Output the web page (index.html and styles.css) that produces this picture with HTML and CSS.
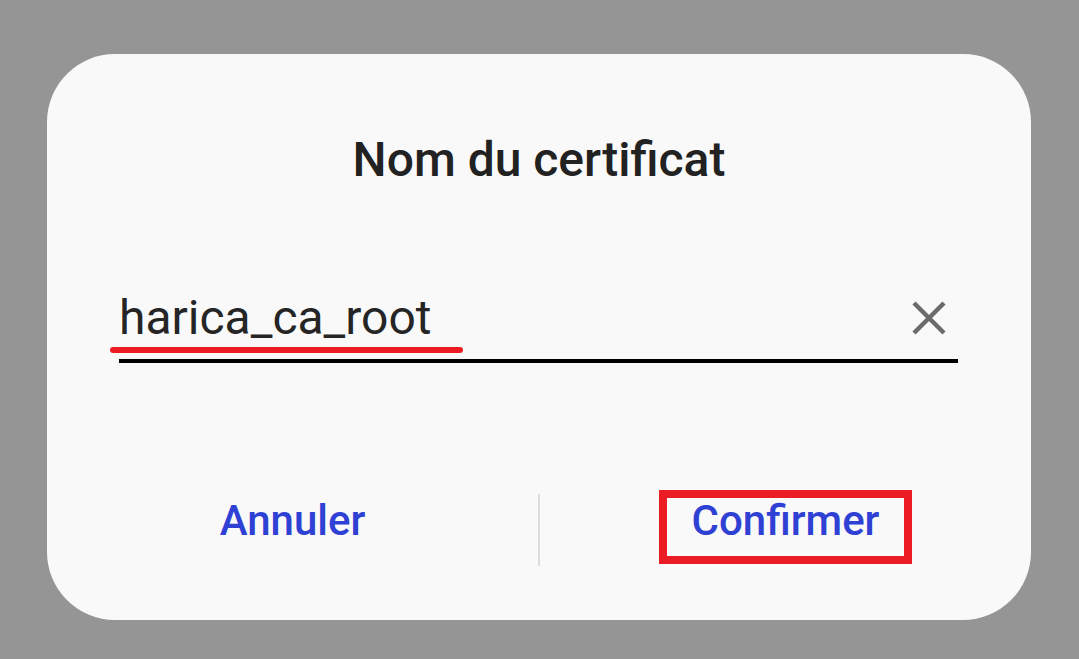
FILE: index.html
```html
<!DOCTYPE html>
<html lang="fr">
<head>
    <meta charset="UTF-8">
    <meta name="viewport" content="width=device-width, initial-scale=1.0">
    <title>Nom du certificat</title>
    <link rel="stylesheet" href="styles.css">
</head>
<body>

    <div class="dialog">
        <h1 class="title">Nom du certificat</h1>

        <div class="field">
            <span class="value">harica_ca_root<span class="mark"></span></span>
            <button class="clear" aria-label="Effacer">
                <svg width="34" height="34" viewBox="0 0 34 34">
                    <path d="M2 2 L32 32 M32 2 L2 32" stroke="#6b6b6b" stroke-width="4.5" fill="none"/>
                </svg>
            </button>
        </div>

        <div class="actions">
            <div class="action">
                <span class="label">Annuler</span>
            </div>
            <div class="divider"></div>
            <div class="action">
                <span class="label boxed">Confirmer</span>
            </div>
        </div>
    </div>

</body>
</html>
```

FILE: styles.css
```css
body {
    margin: 0;
    padding: 54px 48px 0 47px;
    background-color: #959595;
    font-family: Roboto, "Liberation Sans", sans-serif;
    height: 659px;
    box-sizing: border-box;
    overflow: hidden;
}

.dialog {
    background-color: #f9f9f9;
    border-radius: 68px;
    height: 566px;
    display: flex;
    flex-direction: column;
}

.title {
    margin: 78px 0 0 0;
    font-size: 48px;
    line-height: 56px;
    font-weight: 500;
    color: #222222;
    text-align: center;
}

.field {
    margin: 102px 73px 0 72px;
    padding: 0 12px 13px 0;
    border-bottom: 4px solid #000000;
    display: flex;
    align-items: center;
    justify-content: space-between;
}

.value {
    position: relative;
    font-size: 48px;
    line-height: 56px;
    color: #252525;
}

/* red hand-drawn underline on top of the field */
.mark {
    position: absolute;
    left: -9px;
    top: 57px;
    width: 353px;
    height: 6px;
    border-radius: 3px;
    background-color: #ec1c24;
}

.clear {
    background: none;
    border: none;
    padding: 0;
    width: 34px;
    height: 34px;
    display: flex;
}

.actions {
    margin-top: 127px;
    display: flex;
    align-items: flex-start;
}

.action {
    flex: 1;
    display: flex;
    justify-content: center;
}

.divider {
    width: 2px;
    height: 72px;
    margin-top: 4px;
    background-color: #dddddd;
}

.label {
    font-size: 42px;
    line-height: 42px;
    font-weight: 500;
    color: #2f40d4;
    padding: 10px 0 0 0;
}

.boxed {
    border: 8px solid #ec1c24;
    padding: 2px 25px 14px 25px;
}
```
